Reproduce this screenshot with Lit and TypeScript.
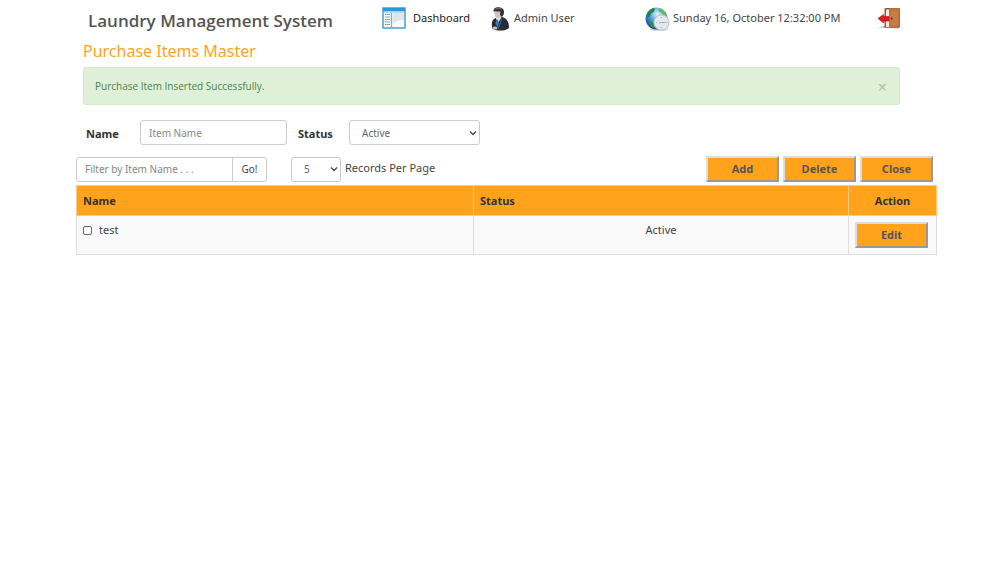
import { LitElement, html, css } from "lit";
import { customElement, state } from "lit/decorators.js";

@customElement("app-root")
export class AppRoot extends LitElement {
  @state() private showAlert = true;
  @state() private items = [{ name: "test", status: "Active" }];

  static styles = css`
    :host {
      display: block;
      font-family: "Noto Sans", "Open Sans", sans-serif;
      font-size: 11px;
      line-height: 16px;
      color: #444;
      background: #fff;
    }
    * { box-sizing: border-box; }
    .page { margin: 0 68px 0 76px; }
    .top {
      display: flex;
      align-items: flex-start;
      height: 39px;
      padding: 7px 36px 0 12px;
    }
    h1 {
      flex: 0 0 294px;
      margin: 0;
      padding-top: 2px;
      font: 600 17px/24px "Open Sans", sans-serif;
      color: #555;
      white-space: nowrap;
    }
    .link {
      display: flex;
      gap: 7px;
      color: #444;
      text-decoration: none;
      line-height: 22px;
      white-space: nowrap;
    }
    .dash { flex: 0 0 109px; color: #222; }
    .user { flex: 1 1 155px; gap: 4px; }
    .clock { flex: 0 0 233px; gap: 3px; }
    .link svg { display: block; flex: none; }
    h2 {
      margin: 0 7px 4px;
      font-size: 16px;
      line-height: 24px;
      font-weight: 400;
      color: #ffa31d;
    }
    .alert {
      display: flex;
      align-items: center;
      justify-content: space-between;
      height: 38px;
      margin: 0 37px 15px 7px;
      padding: 0 12px 0 11px;
      border: 1px solid #d6e9c6;
      border-radius: 3px;
      background: #dff0d8;
      color: #4b814b;
      font: 10px/16px "Open Sans", sans-serif;
    }
    .dismiss {
      padding: 2px 0 0;
      border: 0;
      background: none;
      color: #adbfa8;
      font: 400 16px/18px "Noto Sans", sans-serif;
    }
    .form, .tools { display: flex; align-items: center; }
    .form { padding-left: 10px; margin-bottom: 11px; }
    .form label { padding-top: 3px; font-weight: 700; color: #333; }
    .name-label { width: 54px; }
    .status-label { width: 51px; margin-left: 11px; }
    .field {
      height: 25px;
      border: 1px solid #ccc;
      border-radius: 3px;
      background: #fff;
      color: #666;
      font: 10px/14px "Noto Sans", sans-serif;
      padding: 0 8px;
      outline: 0;
    }
    .field::placeholder { color: #888; opacity: 1; }
    select.field {
      appearance: none;
      padding: 0 12px;
      background: #fff url("data:image/svg+xml,%3Csvg xmlns='http://www.w3.org/2000/svg' width='8' height='6'%3E%3Cpath d='M1 1.500L4 4.500l3-3' fill='none' stroke='%23444' stroke-width='1.300'/%3E%3C/svg%3E") no-repeat right 2px center;
    }
    .name-input { width: 147px; }
    .status-select { width: 131px; }
    .filter { width: 157px; border-radius: 3px 0 0 3px; }
    .go {
      width: 35px;
      margin-left: -1px;
      border-radius: 0 3px 3px 0;
      color: #444;
    }
    .count { width: 50px; margin: 0 4px 0 24px; }
    .tools { padding-right: 4px; margin-bottom: 3px; }
    .tools label { padding-bottom: 2px; }
    .actions { display: flex; gap: 4px; margin-left: auto; }
    .btn {
      width: 73px;
      height: 26px;
      padding: 0;
      border: 2px solid;
      border-color: #ddd #999 #999 #ddd;
      background: #ffa31d;
      color: #555;
      font: 700 11px/16px "Noto Sans", sans-serif;
    }
    table {
      width: 100%;
      border-collapse: collapse;
      table-layout: fixed;
    }
    th, td {
      border: 1px solid #ddd;
      padding: 6px;
      text-align: left;
      vertical-align: top;
    }
    th {
      padding-top: 7px;
      background: #ffa31d;
      color: #333;
      font-weight: 700;
      border-color: #ffcb7c;
    }
    td { background: #f9f9f9; }
    td .btn { display: block; }
    .c-status { width: 375px; }
    .c-action { width: 88px; }
    .center { text-align: center; }
    .item { display: flex; align-items: center; gap: 7px; }
    .item input {
      appearance: none;
      width: 9px;
      height: 9px;
      margin: 0;
      border: 1px solid #666;
      border-radius: 2px;
      background: #fff;
    }
    .item input:checked { background: #555; }
  `;

  private dashIcon() {
    return html`<svg width="24" height="22" viewBox="0 0 24 22" aria-hidden="true">
      <rect x="1" y="1" width="22" height="20" fill="#f7f9fa" stroke="#4b9fcb" stroke-width="1.5"/>
      <rect x="1" y="1" width="22" height="3.5" fill="#3196d2"/>
      <rect x="2" y="4.5" width="20" height="1.5" fill="#b9dcf0"/>
      <path d="M9.5 6v14" stroke="#6cb4da" stroke-width="1.2"/>
      <path d="M10.5 6H22v7c-5 0-8 1-11.500 4z" fill="#e3e5e8"/>
      <path d="M3 7.500h1.500M3 10h1.500M3 12.500h1.500M3 15h1.500M3 17.500h1.500" stroke="#4aa2d0"/>
      <path d="M5 7.500h3M5 10h3M5 12.500h3M5 15h3M5 17.500h3" stroke="#999"/>
    </svg>`;
  }

  private userIcon() {
    return html`<svg width="19" height="24" viewBox="0 0 19 24" aria-hidden="true">
      <path d="M1.500 22C0 16 1 12.500 4.500 11L10 9.500c5 1.500 8 4 8 11.500-3 3-11 3.500-16.500 1z" fill="#252d38"/>
      <path d="M4.500 10.500L7 16l3.500-6z" fill="#edf2f5"/>
      <path d="M5.500 12.500l-1 4 2 4 1.500-4-1-4z" fill="#287fc1"/>
      <path d="M11 10.500L9 17l-2 5" fill="none" stroke="#66707b" stroke-width=".8"/>
      <path d="M1.500 20.500c2-1.500 4-1 5 .5l-1 1.500-3.500 0z" fill="#c8bdb4"/>
      <path d="M3 4l5-1 2 2v5l-3 1.500-3-2z" fill="#d3c3b8"/>
      <path d="M2.500 4.500C2 1.500 5 0 8 .3c4 .2 6 3.200 4.700 7.200L11 10 9 8l.3-3.500C7 5 5 3.500 2.500 4.500z" fill="#343536"/>
      <path d="M4.500 2c2-1 4-1 6 0" fill="none" stroke="#888" stroke-width=".8"/>
    </svg>`;
  }

  private clockIcon() {
    return html`<svg width="25" height="24" viewBox="0 0 25 24" aria-hidden="true">
      <defs><radialGradient id="sea" cx=".55" cy=".3" r=".75">
        <stop offset="0" stop-color="#e2f6ff"/><stop offset=".5" stop-color="#4a9ad8"/><stop offset="1" stop-color="#123a7c"/>
      </radialGradient></defs>
      <ellipse cx="14" cy="22.500" rx="9" ry="1.300" fill="#ccc"/>
      <circle cx="11.500" cy="11.500" r="11" fill="url(#sea)"/>
      <path d="M3 5l5-4 2 .5-1 3-3 2-1 3-3 1z" fill="#1f8340"/>
      <path d="M14 1.500c4 1 7 4 7.500 8l-3-1-2-3-3-1z" fill="#62bd3e"/>
      <path d="M4 14l3 1 3 5-2 1c-3-2-4-4-4-7z" fill="#318e50"/>
      <circle cx="16.500" cy="15.500" r="7.500" fill="#e8ebee" fill-opacity=".97" stroke="#c1c6cb" stroke-width="1.200"/>
      <path d="M16.500 10v1M16.500 20v1M11 15.500h1M21.500 15.500h1M16.500 15.500h4M16.500 15.500l-2.500.5" stroke="#a0a8b0"/>
    </svg>`;
  }

  private exitIcon() {
    return html`<svg width="23" height="22" viewBox="0 0 23 22" aria-hidden="true">
      <path d="M0 20.500L6 19h15v2.500z" fill="#bbb"/>
      <path d="M6.500 1.500L8 1h13q1 0 1 1v18l-1 .8H6.500z" fill="#9a5a30"/>
      <path d="M8 2.500h3v17.500H8z" fill="#eee9e3"/>
      <path d="M11 2l1-.7h9l.5.7v17.500L11 20.800z" fill="#bd773e"/>
      <path d="M13 4h7v13.500l-7 1z" fill="#c37e45"/>
      <circle cx="13.700" cy="11.500" r=".9" fill="#513017"/>
      <path d="M0 11.500L5.500 7.500v2H11v4.500H5.500v2z" fill="#dc1b22" stroke="#b71018" stroke-width=".6"/>
    </svg>`;
  }

  render() {
    return html`<main class="page">
      <header class="top">
        <h1>Laundry Management System</h1>
        <a class="link dash" href="#dashboard">${this.dashIcon()}Dashboard</a>
        <a class="link user" href="#user">${this.userIcon()}Admin User</a>
        <div class="link clock">${this.clockIcon()}<time>Sunday 16, October 12:32:00 PM</time></div>
        <a class="link" href="#logout" aria-label="Log out">${this.exitIcon()}</a>
      </header>
      <h2>Purchase Items Master</h2>
      ${this.showAlert ? html`<div class="alert" role="status">
        <span>Purchase Item Inserted Successfully.</span>
        <button class="dismiss" aria-label="Dismiss" @click=${() => (this.showAlert = false)}>×</button>
      </div>` : null}
      <div class="form">
        <label class="name-label" for="name">Name</label>
        <input class="field name-input" id="name" type="text" placeholder="Item Name">
        <label class="status-label" for="status">Status</label>
        <select class="field status-select" id="status"><option>Active</option><option>Inactive</option></select>
      </div>
      <div class="tools">
        <input class="field filter" type="text" aria-label="Filter by item name" placeholder="Filter by Item Name . . .">
        <button class="field go">Go!</button>
        <select class="field count" id="count"><option>5</option><option>10</option><option>20</option></select>
        <label for="count">Records Per Page</label>
        <div class="actions">
          <button class="btn">Add</button><button class="btn">Delete</button><button class="btn">Close</button>
        </div>
      </div>
      <table>
        <thead><tr><th>Name</th><th class="c-status">Status</th><th class="c-action center">Action</th></tr></thead>
        <tbody>${this.items.map((item, i) => html`<tr>
          <td><div class="item"><input type="checkbox" id="item-${i}"><label for="item-${i}">${item.name}</label></div></td>
          <td class="center">${item.status}</td>
          <td><button class="btn">Edit</button></td>
        </tr>`)}</tbody>
      </table>
    </main>`;
  }
}
